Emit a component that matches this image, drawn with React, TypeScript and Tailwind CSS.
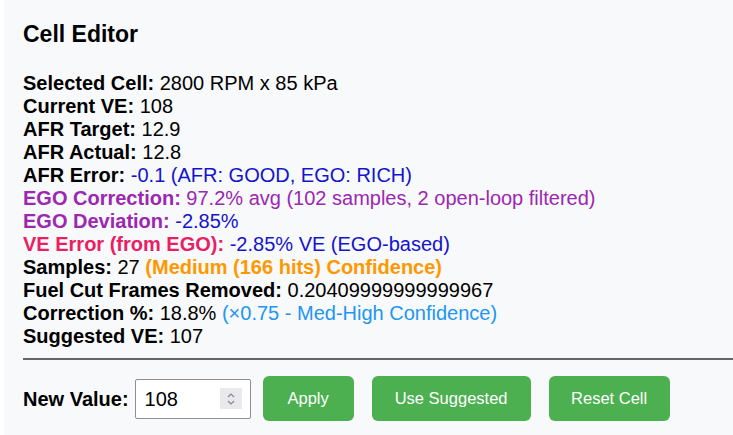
import React from "react";

const Row = ({ label, children, labelClass = "" }: { label: string; children?: React.ReactNode; labelClass?: string }) => (
  <div className="leading-[23px]">
    <span className={`font-bold ${labelClass}`}>{label}</span> {children}
  </div>
);

export default function App() {
  return (
    <div className="w-[733px] h-[435px] bg-white overflow-hidden">
      <div
        className="ml-[4px] h-full bg-[#f8f9fb] pl-[19px] pt-[21px] text-[20px] text-black"
        style={{ fontFamily: '"Liberation Sans", Arial, sans-serif' }}
      >
        <h3 className="text-[23px] font-bold leading-[27px] mb-[24px]">Cell Editor</h3>
        <Row label="Selected Cell:">2800 RPM x 85 kPa</Row>
        <Row label="Current VE:">108</Row>
        <Row label="AFR Target:">12.9</Row>
        <Row label="AFR Actual:">12.8</Row>
        <Row label="AFR Error:">
          <span className="text-[#1414cc]">-0.1 (AFR: GOOD, EGO: RICH)</span>
        </Row>
        <Row label="EGO Correction:" labelClass="text-[#9c27b0]">
          <span className="text-[#9c27b0]">97.2% avg (102 samples, 2 open-loop filtered)</span>
        </Row>
        <Row label="EGO Deviation:" labelClass="text-[#9c27b0]">
          <span className="text-[#1414cc]">-2.85%</span>
        </Row>
        <Row label="VE Error (from EGO):" labelClass="text-[#e91e63]">
          <span className="text-[#1414cc]">-2.85% VE (EGO-based)</span>
        </Row>
        <Row label="Samples:">
          27 <span className="font-bold text-[#ff9800]">(Medium (166 hits) Confidence)</span>
        </Row>
        <Row label="Fuel Cut Frames Removed:">0.20409999999999967</Row>
        <Row label="Correction %:">
          18.8% <span className="text-[#2196f3]">(×0.75 - Med-High Confidence)</span>
        </Row>
        <Row label="Suggested VE:">107</Row>

        <div className="mt-[10px] h-[2px] bg-[#666666]" />

        <div className="mt-[16px] flex items-center">
          <label className="text-[20px] font-bold mr-[6px]">New Value:</label>
          <div className="w-[116px] h-[40px] border border-[#8f8f8f] rounded-[2px] bg-white flex items-center pl-[9px] pr-[8px]">
            <span className="flex-1 text-[20px]">108</span>
            <div className="w-[22px] h-[21px] bg-[#e9e9ed] flex flex-col items-center justify-center">
              <svg width="10" height="16" viewBox="0 0 10 16" fill="none" stroke="#8a8a8a" strokeWidth="1.2">
                <path d="M2 6 L5 3 L8 6" />
                <path d="M2 10 L5 13 L8 10" />
              </svg>
            </div>
          </div>
          <button className="ml-[12px] w-[91px] h-[45px] rounded-[6px] bg-[#4caf50] text-white text-[16.5px]">Apply</button>
          <button className="ml-[18px] w-[159px] h-[45px] rounded-[6px] bg-[#4caf50] text-white text-[16.5px]">Use Suggested</button>
          <button className="ml-[18px] w-[121px] h-[45px] rounded-[6px] bg-[#4caf50] text-white text-[16.5px]">Reset Cell</button>
        </div>
      </div>
    </div>
  );
}
